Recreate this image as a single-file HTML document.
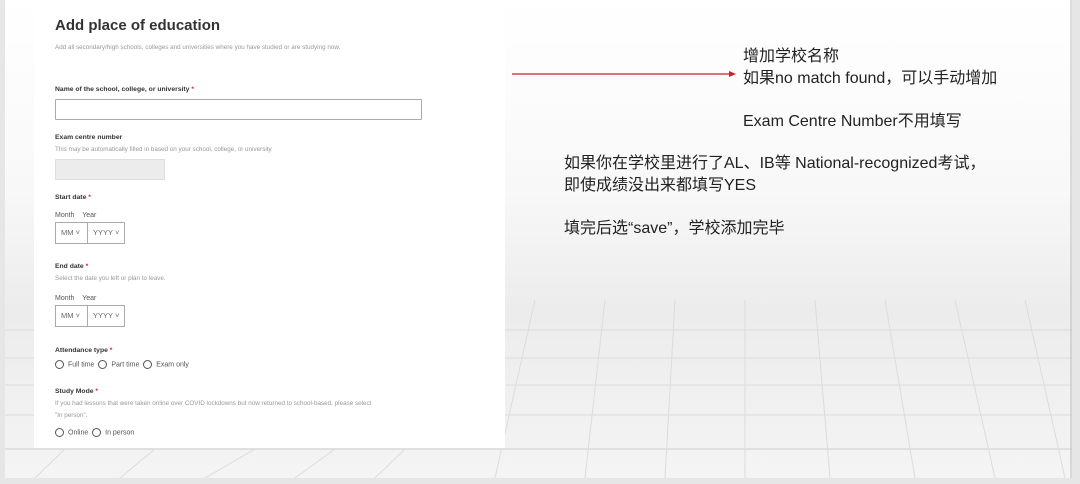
<!DOCTYPE html>
<html><head><meta charset="utf-8"><style>
*{margin:0;padding:0;box-sizing:border-box}
body{width:1080px;height:484px;overflow:hidden;position:relative;background:#e6e6e6;font-family:"Liberation Sans","Noto Sans CJK SC",sans-serif}
#slide{position:absolute;left:5px;top:0;width:1067px;height:478px;background:linear-gradient(#fff 0%,#f8f8f8 40%,#ececec 65%,#f4f4f4 100%);overflow:hidden}
#panel{position:absolute;left:29px;top:10px;width:471px;height:438px;background:#fff}
.a{position:absolute;left:21px;white-space:nowrap}
.t{font-size:15px;color:#333;font-weight:bold}
.s{font-size:6.3px;color:#999}
.b{font-size:6.8px;font-weight:bold;color:#333}
.b i{color:#d22;font-style:normal}
.m{font-size:7px;color:#555}
.inp{position:absolute;border:1px solid #aaa;background:#fff;border-radius:1px}
.sel{position:absolute;border:1px solid #aaa;height:22px;font-size:7.5px;color:#666;line-height:20px;padding-left:5px}
.r{display:inline-block;width:9px;height:9px;border:1px solid #555;border-radius:50%;vertical-align:middle;margin-right:4px}
.rt{position:absolute;font-size:16px;color:#222;white-space:nowrap;font-family:"Liberation Sans","Noto Sans CJK SC",sans-serif}
</style></head><body>
<div id="slide">
<svg width="1067" height="478" style="position:absolute;left:0;top:0" stroke="#dcdcdc" stroke-width="1" fill="none">
<line x1="0" y1="330" x2="1067" y2="330"/><line x1="0" y1="358" x2="1067" y2="358"/><line x1="0" y1="385" x2="1067" y2="385"/><line x1="0" y1="415" x2="1067" y2="415"/><line x1="0" y1="449" x2="1067" y2="449" stroke="#ccc"/>
<line x1="530" y1="300" x2="490" y2="478"/><line x1="600" y1="300" x2="580" y2="478"/><line x1="670" y1="300" x2="660" y2="478"/><line x1="740" y1="300" x2="740" y2="478"/><line x1="810" y1="300" x2="825" y2="478"/><line x1="880" y1="300" x2="910" y2="478"/><line x1="950" y1="300" x2="990" y2="478"/><line x1="1020" y1="300" x2="1060" y2="478"/>
<line x1="250" y1="449" x2="200" y2="478"/><line x1="330" y1="449" x2="290" y2="478"/><line x1="400" y1="449" x2="370" y2="478"/><line x1="60" y1="449" x2="30" y2="478"/><line x1="150" y1="449" x2="115" y2="478"/>
<line x1="1066" y1="0" x2="1066" y2="478" stroke="#bbb"/>
</svg>
<div id="panel">
<div class="a t" style="top:7px">Add place of education</div>
<div class="a s" style="top:34px">Add all secondary/high schools, colleges and universities where you have studied or are studying now.</div>
<div class="a b" style="top:76px">Name of the school, college, or university <i>*</i></div>
<div class="inp" style="left:21px;top:89px;width:367px;height:21px"></div>
<div class="a b" style="top:124px">Exam centre number</div>
<div class="a s" style="top:136px">This may be automatically filled in based on your school, college, or university</div>
<div class="inp" style="left:21px;top:149px;width:110px;height:21px;background:#ececec;border-color:#ddd"></div>
<div class="a b" style="top:184px">Start date <i>*</i></div>
<div class="a m" style="top:202px">Month &nbsp;&nbsp;&nbsp;Year</div>
<div class="sel" style="left:21px;top:212px;width:33px">MM ˅</div>
<div class="sel" style="left:53px;top:212px;width:38px">YYYY ˅</div>
<div class="a b" style="top:253px">End date <i>*</i></div>
<div class="a s" style="top:265px">Select the date you left or plan to leave.</div>
<div class="a m" style="top:285px">Month &nbsp;&nbsp;&nbsp;Year</div>
<div class="sel" style="left:21px;top:295px;width:33px">MM ˅</div>
<div class="sel" style="left:53px;top:295px;width:38px">YYYY ˅</div>
<div class="a b" style="top:337px">Attendance type <i>*</i></div>
<div class="a m" style="top:350px"><span class="r"></span>Full time &nbsp;<span class="r"></span>Part time &nbsp;<span class="r"></span>Exam only</div>
<div class="a b" style="top:378px">Study Mode <i>*</i></div>
<div class="a s" style="top:390px">If you had lessons that were taken online over COVID lockdowns but now returned to school-based, please select</div>
<div class="a s" style="top:402px">"In person".</div>
<div class="a m" style="top:418px"><span class="r"></span>Online &nbsp;<span class="r"></span>In person</div>
</div>
<svg width="1067" height="478" style="position:absolute;left:0;top:0"><line x1="507" y1="74" x2="726" y2="74" stroke="#d02020" stroke-width="1.2"/><path d="M724 71 L731 74 L724 77Z" fill="#d02020"/></svg>
<div class="rt" style="left:738px;top:42px">增加学校名称</div>
<div class="rt" style="left:738px;top:64px">如果no match found，可以手动增加</div>
<div class="rt" style="left:738px;top:107px">Exam Centre Number不用填写</div>
<div class="rt" style="left:559px;top:149px">如果你在学校里进行了AL、IB等 National-recognized考试，</div>
<div class="rt" style="left:559px;top:171px">即使成绩没出来都填写YES</div>
<div class="rt" style="left:559px;top:214px">填完后选“save”，学校添加完毕</div>
</div>
</body></html>
